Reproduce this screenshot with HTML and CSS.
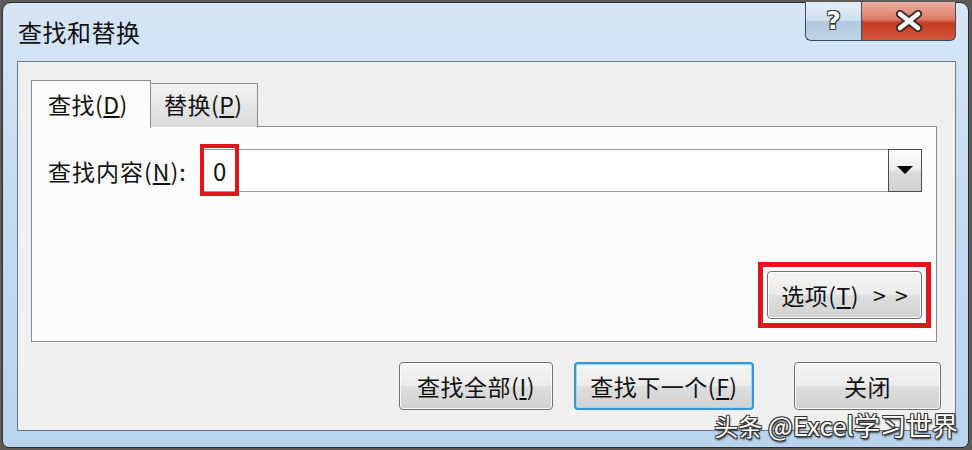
FILE: index.html
```html
<!DOCTYPE html>
<html lang="zh">
<head>
  <meta charset="UTF-8">
  <title>查找和替换</title>
  <link rel="stylesheet" href="styles.css">
</head>
<body>

<div class="window">
  <div class="titlebar">
    <div class="title">查找和替换</div>
    <div class="controls">
      <div class="ctl help">?</div>
      <div class="ctl close">
        <svg width="30" height="22" viewBox="0 0 30 22">
          <path d="M6 4 L24 18 M24 4 L6 18" stroke="#3a2a28" stroke-width="8" stroke-linecap="round"/>
          <path d="M6 4 L24 18 M24 4 L6 18" stroke="#ffffff" stroke-width="4.5" stroke-linecap="round"/>
        </svg>
      </div>
    </div>
  </div>

  <div class="client">
    <div class="tabs">
      <div class="tab active">查找(<u>D</u>)</div>
      <div class="tab">替换(<u>P</u>)</div>
    </div>

    <div class="panel">
      <div class="find-row">
        <label class="find-label">查找内容(<u>N</u>):</label>
        <div class="combo">
          <span class="combo-text">0</span>
          <span class="drop"><span class="arrow"></span></span>
          <span class="mark mark-find"></span>
        </div>
      </div>

      <div class="options-row">
        <button class="btn options">选项(<u>T</u>)<span class="more">&gt; &gt;</span>
          <span class="mark mark-options"></span>
        </button>
      </div>
    </div>

    <div class="actions">
      <button class="btn find-all">查找全部(<u>I</u>)</button>
      <button class="btn find-next focused">查找下一个(<u>F</u>)</button>
      <button class="btn close-btn">关闭</button>
    </div>
  </div>

  <div class="watermark"><span class="wm-src">头条</span> @Excel学习世界</div>
</div>

</body>
</html>
```

FILE: styles.css
```css
body {
  margin: 0;
  background: #5e5a58;
  font-family: "Noto Sans CJK SC", "Noto Sans", sans-serif;
  color: #111;
}

.window {
  position: relative;
  box-sizing: border-box;
  margin: 2px 0 0 2px;
  width: 967px;
  height: 446px;
  border: 1px solid #2c2c30;
  border-radius: 9px 9px 7px 7px;
  background: linear-gradient(to bottom, #d6e6f6 0%, #c6dcf2 40%, #b9d4ef 100%);
  padding: 0 12px 16px 14px;
  display: flex;
  flex-direction: column;
}

.titlebar {
  height: 58px;
  display: flex;
  justify-content: space-between;
  align-items: flex-start;
}
.title {
  margin: 14px 0 0 1px;
  font-size: 24px;
  line-height: 30px;
  letter-spacing: 0.5px;
  color: #111;
}
.controls {
  display: flex;
  margin-top: -1px;
}
.ctl {
  box-sizing: border-box;
  height: 39px;
  border: 1px solid #414b57;
  border-top: none;
  display: flex;
  align-items: center;
  justify-content: center;
}
.help {
  width: 56px;
  border-radius: 0 0 0 6px;
  border-right: none;
  background: linear-gradient(to bottom, #e6eff8 0%, #d0dfee 48%, #b4c9de 52%, #bfd3e6 100%);
  color: #fff;
  font-family: "DejaVu Sans", sans-serif;
  font-weight: bold;
  font-size: 25px;
  line-height: 30px;
  text-shadow: -1px -1px 0 #333, 1px -1px 0 #333, -1px 1px 0 #333, 1px 1px 0 #333;
}
.close {
  width: 95px;
  border-radius: 0 0 6px 0;
  background: linear-gradient(to bottom, #eab0a0 0%, #dc7c66 45%, #c63a22 55%, #d4563a 100%);
}

.client {
  box-sizing: border-box;
  flex: 1;
  background: #f0f0f0;
  border: 1px solid #6b7a8a;
  padding: 17px 14px 18px 13px;
  display: flex;
  flex-direction: column;
}

.tabs {
  display: flex;
  align-items: flex-end;
  height: 48px;
  position: relative;
  z-index: 1;
}
.tab {
  box-sizing: border-box;
  font-size: 23px;
  line-height: 30px;
  letter-spacing: 0.5px;
  border: 1px solid #898c95;
  border-bottom: none;
}
.tab.active {
  width: 120px;
  height: 48px;
  margin-bottom: -1px;
  background: #fcfcfc;
  padding: 8px 0 0 16px;
}
.tab:not(.active) {
  width: 107px;
  height: 44px;
  border-left: none;
  background: linear-gradient(to bottom, #f3f3f3, #e6e6e6 50%, #d9d9d9);
  padding: 5px 0 0 13px;
}

.panel {
  box-sizing: border-box;
  width: 906px;
  height: 216px;
  margin-top: -1px;
  background: #fcfcfc;
  border: 1px solid #898c95;
  padding: 22px 14px 22px 16px;
  display: flex;
  flex-direction: column;
}

.find-row {
  display: flex;
  align-items: center;
}
.find-label {
  font-size: 23px;
  line-height: 30px;
  letter-spacing: 1px;
  width: 154px;
}
.combo {
  position: relative;
  flex: 1;
  box-sizing: border-box;
  height: 43px;
  border: 1px solid #9a9a9a;
  border-right: none;
  background: #fff;
  display: flex;
  align-items: center;
}
.combo-text {
  flex: 1;
  padding-left: 10px;
  font-size: 24px;
  line-height: 30px;
}
.drop {
  box-sizing: border-box;
  width: 34px;
  height: 43px;
  margin-top: -2px;
  margin-bottom: -1px;
  border: 1px solid #4c4c4c;
  background: linear-gradient(to bottom, #fbfbfb 0%, #efefef 45%, #dcdcdc 55%, #d2d2d2 100%);
  display: flex;
  align-items: center;
  justify-content: center;
}
.arrow {
  width: 0;
  height: 0;
  border-left: 8px solid transparent;
  border-right: 8px solid transparent;
  border-top: 8px solid #000;
}

.mark {
  position: absolute;
  box-sizing: border-box;
  border: 4px solid #e3151b;
  pointer-events: none;
}
.mark-find {
  left: -3px;
  top: -6px;
  width: 39px;
  height: 52px;
}
.mark-options {
  left: -10px;
  top: -10px;
  width: 173px;
  height: 66px;
  border-width: 5px;
}

.options-row {
  margin-top: auto;
  display: flex;
  justify-content: flex-end;
}

.btn {
  position: relative;
  box-sizing: border-box;
  height: 48px;
  border: 1px solid #707070;
  border-radius: 4px;
  background: linear-gradient(to bottom, #f4f4f4 0%, #ececec 48%, #dedede 52%, #d1d1d1 100%);
  box-shadow: inset 0 0 0 1px #fbfbfb;
  font-family: "Noto Sans CJK SC", "Noto Sans", sans-serif;
  font-size: 23px;
  line-height: 30px;
  letter-spacing: 0.5px;
  color: #111;
  padding: 0;
}
.options {
  width: 155px;
  padding-left: 2px;
}
.more {
  margin-left: 14px;
  letter-spacing: 2px;
}

.actions {
  display: flex;
  justify-content: flex-end;
  margin-top: 20px;
  gap: 21px;
}
.find-all {
  width: 154px;
}
.find-next {
  width: 180px;
}
.focused {
  border: 2px solid #3796d6;
  box-shadow: inset 0 0 0 1px #9ed8f6, inset 0 0 3px #c5e9fb;
}
.close-btn {
  width: 147px;
  margin-left: 19px;
}

.watermark {
  position: absolute;
  right: 10px;
  bottom: 5px;
  font-size: 26px;
  line-height: 32px;
  color: #fff;
  text-shadow: -1px -1px 0 #333, 1px -1px 0 #333, -1px 1px 0 #333, 1px 1px 0 #333, 1px 2px 2px #222;
}
.wm-src {
  font-size: 24px;
}
```
